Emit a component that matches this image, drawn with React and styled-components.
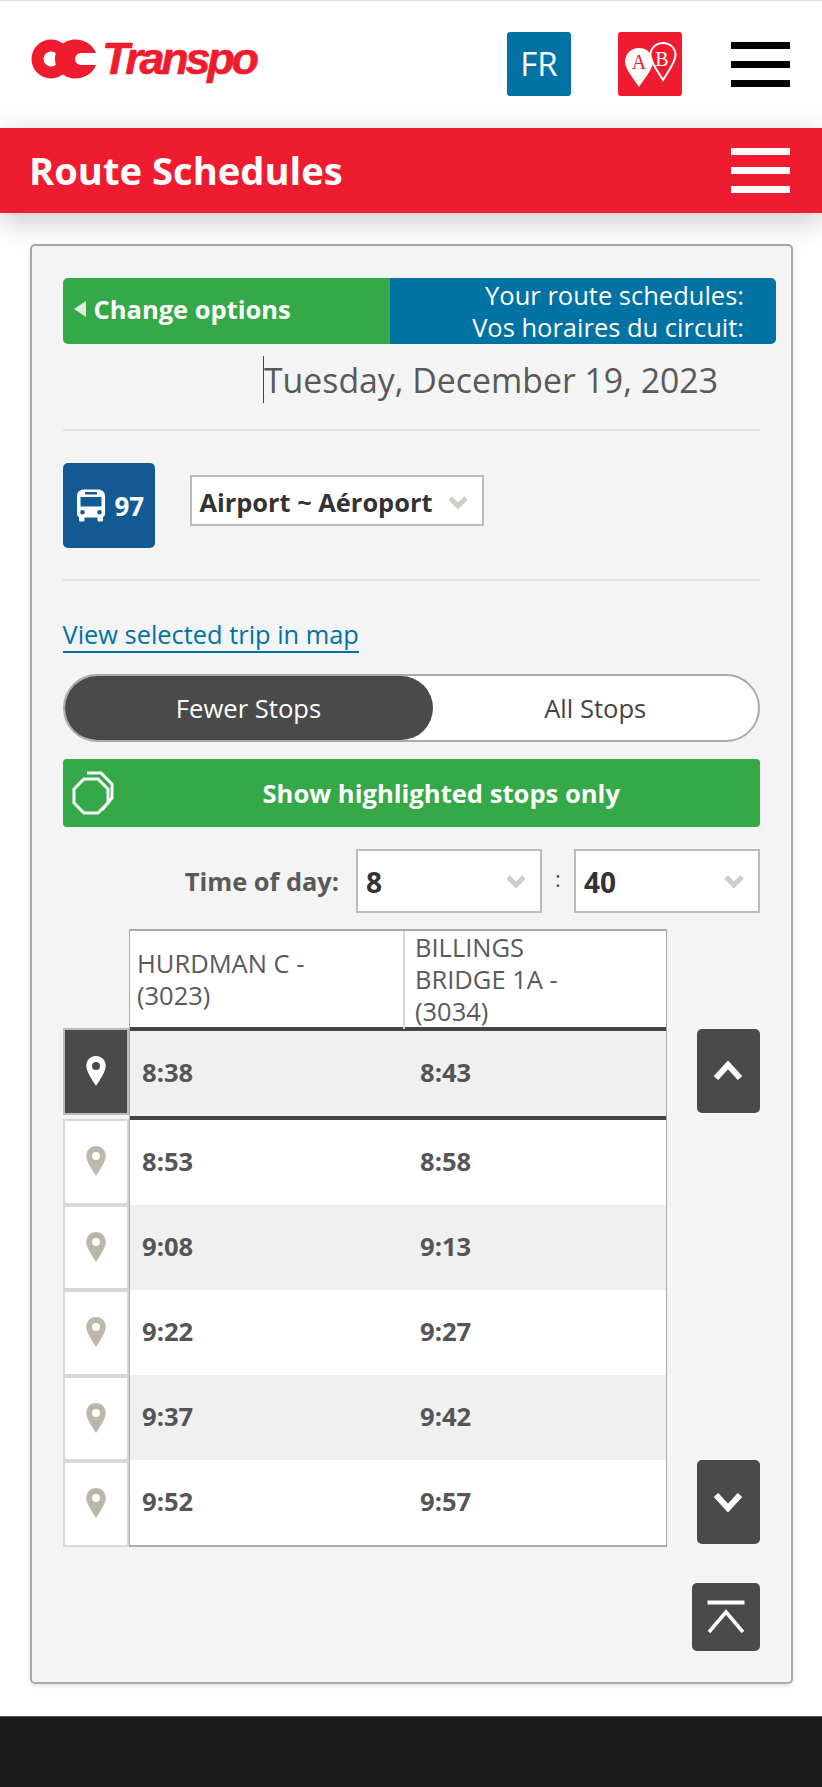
import React from "react";
import styled, { createGlobalStyle } from "styled-components";

const Global = createGlobalStyle`
  * { box-sizing: border-box; }
  html, body { margin: 0; padding: 0; background: #fff; }
  body { font-family: "Open Sans", "Liberation Sans", sans-serif; color: #555; }
`;

const Page = styled.div`
  width: 822px;
  height: 1787px;
  overflow: hidden;
  display: flex;
  flex-direction: column;
`;

const TopBar = styled.header`
  height: 128px;
  border-top: 1px solid #dcdcdc;
  background: #fff;
  display: flex;
  align-items: center;
  padding: 0 32px 0 31px;
`;

const Logo = styled.div`
  display: flex;
  align-items: center;
  color: #ef1c30;
  margin-right: auto;
  margin-bottom: 12px;
`;

const LogoText = styled.span`
  font-family: "Liberation Sans", Arial, sans-serif;
  font-style: italic;
  font-weight: 700;
  font-size: 45px;
  line-height: 50px;
  letter-spacing: -3.3px;
  margin-left: 5px;
  -webkit-text-stroke: 0.6px #ef1c30;
`;

const SquareButton = styled.div`
  width: 64px;
  height: 64px;
  margin-bottom: 2px;
  border-radius: 3px;
  background: ${(p) => p.$bg};
  color: #fff;
  font-size: 33px;
  display: flex;
  align-items: center;
  justify-content: center;
  margin-left: ${(p) => p.$gap}px;
`;

const Burger = styled.div`
  width: 59px;
  height: 45px;
  margin-left: ${(p) => p.$gap}px;
  margin-bottom: 1px;
  display: flex;
  flex-direction: column;
  justify-content: space-between;
`;

const BurgerBar = styled.span`
  display: block;
  height: 7px;
  background: ${(p) => p.$color};
`;

const TitleBand = styled.div`
  height: 85px;
  background: #ef1c30;
  box-shadow: 0 8px 30px rgba(0, 0, 0, 0.22);
  display: flex;
  align-items: center;
  justify-content: space-between;
  padding: 0 32px 0 29px;
  position: relative;
`;

const Title = styled.h1`
  margin: 0 0 2px;
  color: #fff;
  font-size: 38.2px;
  font-weight: 700;
  line-height: 48px;
`;

const Card = styled.main`
  margin: 31px 29px 0 30px;
  height: 1440px;
  border: 2px solid #a9a9a9;
  border-radius: 5px;
  background: #f4f4f4;
  box-shadow: 0 2px 4px rgba(0, 0, 0, 0.12);
  padding: 32px 31px 0 30.5px;
`;

const ResultBar = styled.div`
  display: flex;
  height: 66px;
  margin-right: -16px;
  border-radius: 5px;
  overflow: hidden;
  color: #fff;
  font-size: 25.5px;
`;

const ChangeOptions = styled.div`
  width: 327px;
  background: #35a947;
  display: flex;
  align-items: center;
  padding: 0 0 5px 10px;
  gap: 7px;
  font-weight: 700;
`;

const YourRoutes = styled.div`
  flex: 1;
  background: #0072a3;
  text-align: right;
  padding-right: 32px;
  line-height: 32px;
  padding-top: 1px;
`;

const DateRow = styled.div`
  margin-top: 12px;
  padding-right: 42px;
  height: 47px;
  display: flex;
  justify-content: flex-end;
`;

const DateText = styled.div`
  border-left: 1px solid #444;
  font-size: 33.8px;
  line-height: 49px;
  height: 47px;
  color: #595959;
`;

const Divider = styled.hr`
  margin: ${(p) => p.$top}px 0 0;
  border: 0;
  height: 2px;
  background: #e0e0e0;
`;

const RouteRow = styled.div`
  margin-top: 32px;
  display: flex;
  align-items: flex-start;
`;

const RouteBadge = styled.div`
  width: 92px;
  height: 85px;
  border-radius: 5px;
  background: #135a94;
  color: #fff;
  display: flex;
  align-items: center;
  padding-left: 14px;
  gap: 10px;
  font-size: 26px;
  font-weight: 700;
`;

const Select = styled.div`
  width: ${(p) => p.$w}px;
  height: ${(p) => p.$h}px;
  margin-top: ${(p) => p.$top || 0}px;
  margin-left: ${(p) => p.$left || 0}px;
  background: #fff;
  border: 2px solid #bbb;
  color: #333;
  font-weight: 700;
  font-size: ${(p) => p.$size}px;
  display: flex;
  align-items: center;
  justify-content: space-between;
  padding: ${(p) => p.$nudge || 2}px 13px 0 8px;
`;

const MapLink = styled.a`
  display: inline-block;
  margin-top: 37px;
  color: #0072a3;
  font-size: 25.4px;
  line-height: 33px;
  border-bottom: 2px solid #0072a3;
  vertical-align: top;
`;

const Toggle = styled.div`
  margin-top: 21px;
  height: 68px;
  border: 2px solid #aaa;
  border-radius: 34px;
  background: #fff;
  display: flex;
  font-size: 25.6px;
`;

const ToggleOption = styled.div`
  width: ${(p) => (p.$active ? "368px" : "auto")};
  flex: ${(p) => (p.$active ? "none" : 1)};
  background: ${(p) => (p.$active ? "#4a4a4a" : "transparent")};
  color: ${(p) => (p.$active ? "#fff" : "#444")};
  border-radius: 32px;
  display: flex;
  align-items: center;
  justify-content: center;
`;

const HighlightButton = styled.div`
  position: relative;
  margin-top: 17px;
  height: 68px;
  border-radius: 4px;
  background: #35a947;
  color: #fff;
  font-weight: 700;
  font-size: 25.6px;
  display: flex;
  align-items: center;
  justify-content: center;
  padding-left: 60px;
`;

const HighlightIconSlot = styled.span`
  position: absolute;
  left: 8px;
  top: 12px;
  line-height: 0;
`;

const TimeRow = styled.div`
  margin-top: 22px;
  height: 63px;
  display: flex;
  align-items: center;
  justify-content: flex-end;
`;

const TimeLabel = styled.div`
  font-size: 25.4px;
  font-weight: 700;
  color: #595959;
  margin-right: 17px;
`;

const Colon = styled.div`
  width: 32px;
  text-align: center;
  font-size: 22px;
  margin-top: -6px;
`;

const Schedule = styled.div`
  margin-top: 17px;
  display: flex;
`;

const IconColumn = styled.div`
  width: 66.5px;
  padding-top: 99px;
  display: flex;
  flex-direction: column;
`;

const IconCell = styled.div`
  height: ${(p) => (p.$first ? 87 : 85.5)}px;
  margin-bottom: ${(p) => (p.$first ? 4 : 0)}px;
  background: ${(p) => (p.$active ? "#4a4a4a" : "#fff")};
  border: 2px solid ${(p) => (p.$active ? "#bbb" : "#d8d7d1")};
  display: flex;
  align-items: center;
  justify-content: center;
  padding: 0 0 1px 1px;
`;

const Table = styled.div`
  width: 537.5px;
  border: solid #aaa;
  border-width: 2px 1px 2px 1px;
  background: #fff;
`;

const HeaderRow = styled.div`
  height: 96px;
  display: grid;
  grid-template-columns: 273px 1fr;
`;

const HeaderCell = styled.div`
  display: flex;
  align-items: center;
  font-size: 25.5px;
  line-height: 32px;
  color: #5a5a5a;
  padding-left: ${(p) => p.$pad}px;
  padding-right: 60px;
  padding-bottom: 2px;
  border-left: ${(p) => (p.$line ? "2px solid #d8d7d1" : "none")};
`;

const TimeTableRow = styled.div`
  display: grid;
  grid-template-columns: 278px 1fr;
  align-items: center;
  height: ${(p) => (p.$selected ? 93 : 85)}px;
  background: ${(p) => (p.$shade ? "#f0f0f0" : "#fff")};
  border: ${(p) => (p.$selected ? "solid #444" : "none")};
  border-width: 4px 0;
  font-size: 25.6px;
  font-weight: 700;
  color: #555;
  padding: 0 0 3px 12px;
`;

const ArrowColumn = styled.div`
  width: 63px;
  margin-left: 30px;
  padding-top: 100px;
  padding-bottom: 3px;
  display: flex;
  flex-direction: column;
  justify-content: space-between;
`;

const ArrowButton = styled.div`
  width: 63px;
  height: 84px;
  border-radius: 5px;
  background: #4a4a4a;
  display: flex;
  align-items: center;
  justify-content: center;
`;

const TopRow = styled.div`
  margin-top: 36px;
  display: flex;
  justify-content: flex-end;
`;

const TopButton = styled.div`
  width: 68px;
  height: 68px;
  border-radius: 5px;
  background: #4a4a4a;
  display: flex;
  align-items: center;
  justify-content: center;
`;

const Footer = styled.footer`
  margin-top: 32px;
  flex: 1;
  background: #1a1a1a;
  border-top: 1px solid #555;
`;

const Chevron = () => (
  <svg width="22" height="15" viewBox="0 0 22 15">
    <path d="M3 3 L11 11 L19 3" fill="none" stroke="#cfcdc5" strokeWidth="5" />
  </svg>
);

const Pin = ({ color, hole }) => (
  <svg width="20" height="30" viewBox="0 0 20 30">
    <path d="M10 0 C4.500 0 0.300 4.300 0.300 10 C0.300 15 6 24 10 30 C14 24 19.700 15 19.700 10 C19.700 4.300 15.500 0 10 0 Z" fill={color} />
    <circle cx="10" cy="10" r="4" fill={hole} />
  </svg>
);

const OcMark = () => (
  <svg width="66" height="40" viewBox="0 0 66 40">
    <path fillRule="evenodd" fill="#ef1c30" d="M20 0.500 A19.500 19.500 0 1 0 20 39.500 A19.500 19.500 0 1 0 20 0.500 Z M20 12.500 A7.500 7.500 0 1 1 20 27.500 A7.500 7.500 0 1 1 20 12.500 Z" />
    <path fill="#ef1c30" d="M44 0.500 C54 0.500 62 6 65 14 L50 14 A6 6 0 0 0 50 26 L65 26 C62 34 54 39.500 44 39.500 C33 39.500 24 30.500 24 20 C24 9.500 33 0.500 44 0.500 Z" />
  </svg>
);

const AbIcon = () => (
  <svg width="54" height="52" viewBox="0 0 54 52">
    <path d="M16 10 C8 10 2 16 2 24 C2 31 11 41 16 49 C21 41 30 31 30 24 C30 16 24 10 16 10 Z" fill="#fff" />
    <path d="M40 5 C33 5 27.500 10 27.500 17 C27.500 24 35 34 40 42 C45 34 52.500 24 52.500 17 C52.500 10 47 5 40 5 Z" fill="#ef1c30" stroke="#fff" strokeWidth="2" />
    <text x="16" y="31" textAnchor="middle" fontFamily="Liberation Serif, serif" fontSize="20" fill="#ef1c30">A</text>
    <text x="39" y="28" textAnchor="middle" fontFamily="Liberation Serif, serif" fontSize="20" fill="#fff">B</text>
  </svg>
);

const BusIcon = () => (
  <svg width="28" height="33" viewBox="0 0 28 33">
    <path fill="#fff" fillRule="evenodd" d="M7 0.500 H21 C25 0.500 28 3 28 7 V25 C28 26.500 27 27.500 26 28 V31 C26 32 25.300 32.500 24.500 32.500 H22 C21 32.500 20.500 32 20.500 31 V28.500 H7.500 V31 C7.500 32 7 32.500 6 32.500 H3.500 C2.700 32.500 2 32 2 31 V28 C1 27.500 0 26.500 0 25 V7 C0 3 3 0.500 7 0.500 Z M8 3 V5.500 H20 V3 Z M3.500 8 V17.500 H24.500 V8 Z M5.500 21 A2.300 2.300 0 1 0 5.500 25.600 A2.300 2.300 0 1 0 5.500 21 Z M22.500 21 A2.300 2.300 0 1 0 22.500 25.600 A2.300 2.300 0 1 0 22.500 21 Z" />
  </svg>
);

const OctagonsIcon = () => (
  <svg width="44" height="44" viewBox="0 0 44 44" fill="none" stroke="#fff" strokeWidth="3">
    <path d="M16 2 H30 L41 13 V27 L31 39" />
    <path d="M13 8 H27 L37 18 V32 L27 42 H13 L3 32 V18 Z" />
  </svg>
);

const rows = [
  ["8:53", "8:58"],
  ["9:08", "9:13"],
  ["9:22", "9:27"],
  ["9:37", "9:42"],
  ["9:52", "9:57"],
];

export default function App() {
  return (
    <Page>
      <Global />
      <TopBar>
        <Logo>
          <OcMark />
          <LogoText>Transpo</LogoText>
        </Logo>
        <SquareButton $bg="#0072a3" $gap={0}>FR</SquareButton>
        <SquareButton $bg="#ef1c30" $gap={47}><AbIcon /></SquareButton>
        <Burger $gap={49}>
          <BurgerBar $color="#000" />
          <BurgerBar $color="#000" />
          <BurgerBar $color="#000" />
        </Burger>
      </TopBar>
      <TitleBand>
        <Title>Route Schedules</Title>
        <Burger $gap={0}>
          <BurgerBar $color="#fff" />
          <BurgerBar $color="#fff" />
          <BurgerBar $color="#fff" />
        </Burger>
      </TitleBand>
      <Card>
        <ResultBar>
          <ChangeOptions>
            <svg width="14" height="18" viewBox="0 0 14 18"><path d="M13 1 V17 L1 9 Z" fill="#dfe9dc" /></svg>
            Change options
          </ChangeOptions>
          <YourRoutes>
            Your route schedules:<br />Vos horaires du circuit:
          </YourRoutes>
        </ResultBar>
        <DateRow>
          <DateText>Tuesday, December 19, 2023</DateText>
        </DateRow>
        <Divider $top={26} />
        <RouteRow>
          <RouteBadge><BusIcon />97</RouteBadge>
          <Select $w={294} $h={51} $top={12} $left={35} $size={25.4} $nudge={3}>
            Airport ~ Aéroport<Chevron />
          </Select>
        </RouteRow>
        <Divider $top={31} />
        <MapLink>View selected trip in map</MapLink>
        <Toggle>
          <ToggleOption $active>Fewer Stops</ToggleOption>
          <ToggleOption>All Stops</ToggleOption>
        </Toggle>
        <HighlightButton>
          <HighlightIconSlot><OctagonsIcon /></HighlightIconSlot>
          Show highlighted stops only
        </HighlightButton>
        <TimeRow>
          <TimeLabel>Time of day:</TimeLabel>
          <Select $w={186} $h={64} $size={28}>8<Chevron /></Select>
          <Colon>:</Colon>
          <Select $w={186} $h={64} $size={28}>40<Chevron /></Select>
        </TimeRow>
        <Schedule>
          <IconColumn>
            <IconCell $active $first><Pin color="#fff" hole="#4a4a4a" /></IconCell>
            {rows.map((r) => (
              <IconCell key={r[0]}><Pin color="#bdb7aa" hole="#fff" /></IconCell>
            ))}
          </IconColumn>
          <Table>
            <HeaderRow>
              <HeaderCell $pad={7}>HURDMAN C - (3023)</HeaderCell>
              <HeaderCell $pad={10} $line>BILLINGS BRIDGE 1A - (3034)</HeaderCell>
            </HeaderRow>
            <TimeTableRow $selected $shade><span>8:38</span><span>8:43</span></TimeTableRow>
            {rows.map((r, i) => (
              <TimeTableRow key={r[0]} $shade={i % 2 === 1}>
                <span>{r[0]}</span>
                <span>{r[1]}</span>
              </TimeTableRow>
            ))}
          </Table>
          <ArrowColumn>
            <ArrowButton>
              <svg width="32" height="22" viewBox="0 0 32 22"><path d="M4 18 L16 5 L28 18" fill="none" stroke="#fff" strokeWidth="6" /></svg>
            </ArrowButton>
            <ArrowButton>
              <svg width="32" height="22" viewBox="0 0 32 22"><path d="M4 4 L16 17 L28 4" fill="none" stroke="#fff" strokeWidth="6" /></svg>
            </ArrowButton>
          </ArrowColumn>
        </Schedule>
        <TopRow>
          <TopButton>
            <svg width="38" height="34" viewBox="0 0 38 34" fill="none" stroke="#fff">
              <path d="M0.500 2.500 H37.500" strokeWidth="4" />
              <path d="M2 32 L19 12 L36 32" strokeWidth="3.500" />
            </svg>
          </TopButton>
        </TopRow>
      </Card>
      <Footer />
    </Page>
  );
}
